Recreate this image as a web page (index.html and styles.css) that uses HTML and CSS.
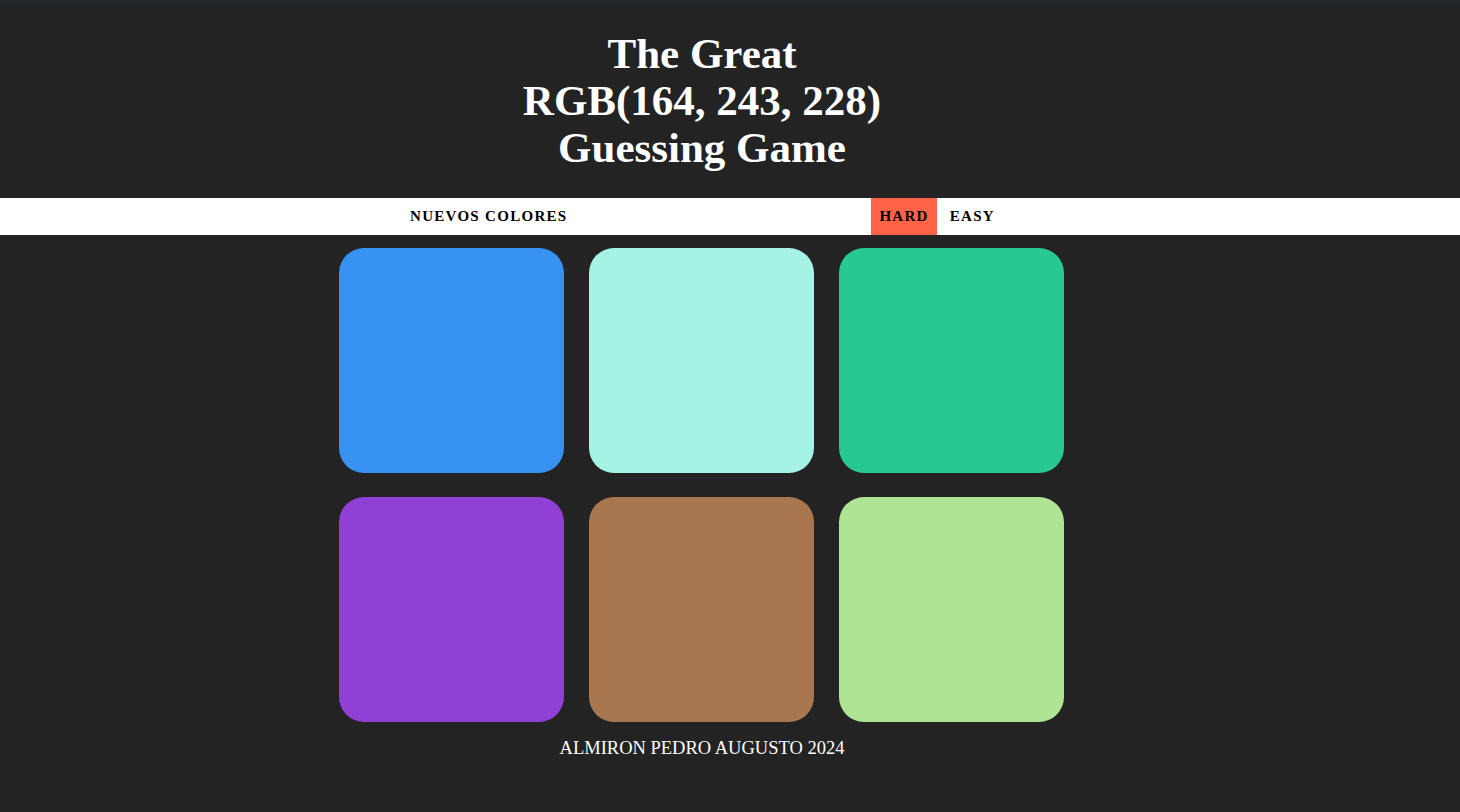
FILE: index.html
```html
<!DOCTYPE html>
<html lang="es">
<head>
<meta charset="utf-8">
<title>The Great RGB Guessing Game</title>
<link rel="stylesheet" href="styles.css">
</head>
<body>
<header class="header">
  <h1 class="title">The Great<br><span class="rgb">RGB(164, 243, 228)</span><br>Guessing Game</h1>
</header>
<nav class="bar">
  <div class="bar-inner">
    <button class="btn btn-new">NUEVOS COLORES</button>
    <span class="message"></span>
    <div class="modes">
      <button class="btn mode selected">HARD</button>
      <button class="btn mode">EASY</button>
    </div>
  </div>
</nav>
<main class="board">
  <div class="square" style="background: rgb(55, 146, 242)"></div>
  <div class="square" style="background: rgb(164, 243, 228)"></div>
  <div class="square" style="background: rgb(39, 200, 147)"></div>
  <div class="square" style="background: rgb(145, 64, 214)"></div>
  <div class="square" style="background: rgb(168, 119, 79)"></div>
  <div class="square" style="background: rgb(176, 228, 149)"></div>
</main>
<footer class="footer">ALMIRON PEDRO AUGUSTO 2024</footer>
</body>
</html>
```

FILE: styles.css
```css
* { box-sizing: border-box; }

html, body {
  margin: 0;
  padding: 0;
  background: #232323;
}

body {
  border-top: 3px solid #21262b;
  font-family: "Liberation Serif", "Times New Roman", serif;
  color: #ffffff;
  min-height: 812px;
}

.header {
  padding: 27px 56px 27px 0;
  text-align: center;
}

.title {
  margin: 0;
  font-size: 43px;
  line-height: 47px;
  font-weight: bold;
  color: #ffffff;
}

.bar {
  background: #ffffff;
  height: 37px;
}

.bar-inner {
  width: 604px;
  margin: 0 auto;
  position: relative;
  left: -28px;
  height: 37px;
  display: flex;
  align-items: stretch;
  justify-content: space-between;
}

.btn {
  font-family: "Liberation Serif", "Times New Roman", serif;
  font-weight: bold;
  font-size: 15px;
  letter-spacing: 1.3px;
  color: #000000;
  background: transparent;
  border: none;
  padding: 0 10px;
  margin: 0;
  cursor: pointer;
}

.modes {
  display: flex;
  align-items: stretch;
}

.mode {
  padding: 0 8px;
}

.mode + .mode {
  padding: 0 9px 0 13px;
}

.selected {
  background: #ff6347;
}

.board {
  width: 725px;
  margin: 13px auto 0;
  position: relative;
  left: -28.5px;
  display: grid;
  grid-template-columns: repeat(3, 225px);
  column-gap: 25px;
  row-gap: 24px;
}

.square {
  width: 225px;
  height: 225px;
  border-radius: 25px;
}

.footer {
  text-align: center;
  padding-right: 56px;
  margin-top: 14px;
  font-size: 18.5px;
  line-height: 24px;
}
```
